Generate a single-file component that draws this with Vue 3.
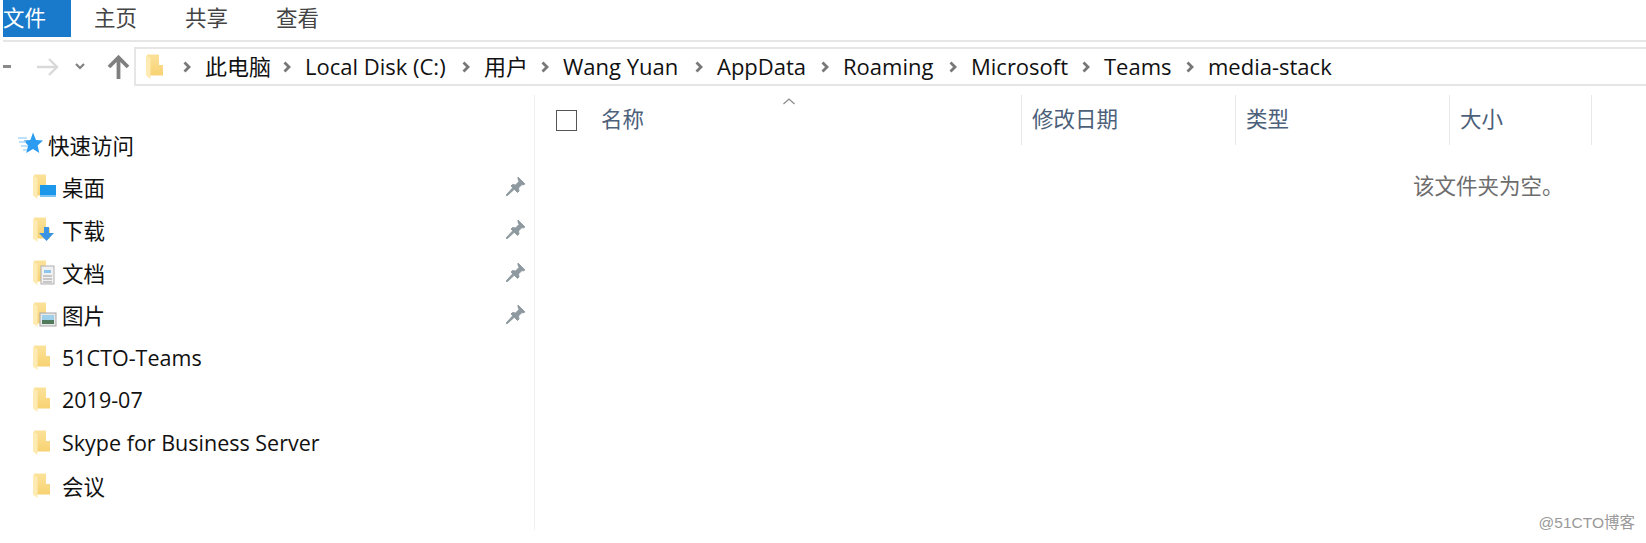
<template>
  <div class="explorer">
    <div class="ribbon">
      <div class="tab file-tab">文件</div>
      <div v-for="tab in tabs" :key="tab" class="tab">{{ tab }}</div>
    </div>

    <div class="nav-row">
      <div class="nav-buttons">
        <div class="back-stub"></div>
        <svg class="forward" width="22" height="20" viewBox="0 0 22 20">
          <path d="M0 10h20M12 2l8 8-8 8" fill="none" stroke="#d9d9d9" stroke-width="2.4" />
        </svg>
        <svg class="recent" width="10" height="7" viewBox="0 0 10 7">
          <path d="M1 1l4 4 4-4" fill="none" stroke="#808080" stroke-width="2.2" />
        </svg>
        <svg class="up" width="23" height="24" viewBox="0 0 23 24">
          <path d="M11.5 24V3M2 12l9.500-9.500L21 12" fill="none" stroke="#7f7f7f" stroke-width="3.800" />
        </svg>
      </div>
      <div class="address">
        <svg class="address-folder" width="17" height="25" viewBox="0 0 17 25">
          <defs>
            <linearGradient id="folderFill" x1="0" y1="0" x2="0" y2="1">
              <stop offset="0" stop-color="#fbe29a" />
              <stop offset="1" stop-color="#f8d272" />
            </linearGradient>
          </defs>
          <path d="M1 .5H13V11H17V21.500H4Z" fill="url(#folderFill)" />
          <path d="M0 1.500L4.500 4V25L0 21.500Z" fill="#fdebb3" />
        </svg>
        <template v-for="crumb in crumbs" :key="crumb.text">
          <svg class="crumb-sep" width="8" height="12" viewBox="0 0 8 12">
            <path d="M1.500 1.500L6 6l-4.500 4.500" fill="none" stroke="#777" stroke-width="2.800" />
          </svg>
          <span class="crumb" :style="{ width: crumb.width + 'px' }">{{ crumb.text }}</span>
        </template>
      </div>
    </div>

    <div class="main">
      <div class="sidebar">
        <div class="row quick">
          <svg class="star" width="25" height="24" viewBox="0 0 25 24">
            <path d="M15 0.500l3 7.500 7 .6-5.400 4.900 1.700 7.500-6.300-3.900-6.800 4 2-7.600-4.600-4.900 6.800-.6z" fill="#2b9cf2" />
            <path d="M0 6h9M1 10h7M3 14h7M5 18h4" stroke="#a9d6f8" stroke-width="1.300" />
          </svg>
          <span>快速访问</span>
        </div>
        <div v-for="item in places" :key="item.name" class="row place">
          <svg class="place-icon" width="24" height="25" viewBox="0 0 24 25">
            <path d="M1 .5H13V11H17V21.500H4Z" fill="url(#folderFill)" />
            <path d="M0 1.500L4.500 4V25L0 21.500Z" fill="#fdebb3" />
            <template v-if="item.icon === 'desktop'">
              <rect x="7" y="11" width="16" height="12" fill="#1c97ea" />
              <rect x="7" y="21" width="16" height="2" fill="#7cc3f2" />
            </template>
            <template v-else-if="item.icon === 'download'">
              <path d="M11 10h5v6h5l-7.500 8L6 16h5z" fill="#3b93e4" />
            </template>
            <template v-else-if="item.icon === 'doc'">
              <rect x="8" y="6" width="13" height="18" fill="#f1f1f1" stroke="#b0b0b0" />
              <rect x="11" y="10" width="7" height="3" fill="#8ac6ee" />
              <path d="M10 16h9M10 19h9M10 22h9" stroke="#9d9d9d" />
            </template>
            <template v-else-if="item.icon === 'pic'">
              <rect x="7" y="11" width="16" height="13" fill="#e8e8e8" stroke="#a5a5a5" />
              <rect x="9" y="13" width="12" height="5" fill="#9fd0ea" />
              <rect x="9" y="18" width="12" height="4" fill="#4f7a5c" />
            </template>
          </svg>
          <span class="place-name">{{ item.name }}</span>
          <svg v-if="item.pinned" class="pin" width="19" height="19" viewBox="0 0 19 19">
            <path d="M12 0l7 7-2 1-1-.5-3.500 3.500.5 3-1.500 1.500L5 9l1.500-1.500 3 .5L13 4.500 12 2zM6.500 11L8 12.500 1.500 18.500 0 19l.5-1.500z" fill="#8d989f" stroke="#8d989f" stroke-width=".9" />
          </svg>
        </div>
      </div>

      <div class="list">
        <div class="list-header">
          <div class="col col-name">
            <span class="checkbox"></span>
            <span>名称</span>
            <svg class="sort" width="12" height="7" viewBox="0 0 12 7">
              <path d="M.5 6L6 1l5.500 5" fill="none" stroke="#8a8a8a" stroke-width="1.200" />
            </svg>
          </div>
          <div class="col col-date">修改日期</div>
          <div class="col col-type">类型</div>
          <div class="col col-size">大小</div>
        </div>
        <div class="empty">该文件夹为空。</div>
      </div>
    </div>

    <div class="watermark">@51CTO博客</div>
  </div>
</template>

<script setup>
const tabs = ['主页', '共享', '查看']

const crumbs = [
  { text: '此电脑', width: 64 },
  { text: 'Local Disk (C:)', width: 143 },
  { text: '用户', width: 43 },
  { text: 'Wang Yuan', width: 118 },
  { text: 'AppData', width: 90 },
  { text: 'Roaming', width: 92 },
  { text: 'Microsoft', width: 97 },
  { text: 'Teams', width: 68 },
  { text: 'media-stack', width: 125 }
]

const places = [
  { name: '桌面', icon: 'desktop', pinned: true },
  { name: '下载', icon: 'download', pinned: true },
  { name: '文档', icon: 'doc', pinned: true },
  { name: '图片', icon: 'pic', pinned: true },
  { name: '51CTO-Teams' },
  { name: '2019-07' },
  { name: 'Skype for Business Server' },
  { name: '会议' }
]
</script>

<style>
html,
body {
  margin: 0;
  background: #fff;
}
</style>

<style scoped>
.explorer {
  position: relative;
  width: 1646px;
  height: 543px;
  overflow: hidden;
  background: #fff;
  color: #111;
  font-family: "Open Sans", "Noto Sans CJK SC", sans-serif;
  font-size: 21.500px;
}

.ribbon {
  display: flex;
  height: 40px;
  margin-left: 3px;
  border-bottom: 2px solid #e6e6e6;
}

.tab {
  width: 91px;
  height: 37px;
  line-height: 35px;
  color: #444;
  text-align: center;
  flex-shrink: 0;
}

.file-tab {
  width: 68px;
  box-sizing: border-box;
  background: #1979ca;
  color: #fff;
  margin-right: -1px;
  text-align: left;
}

.nav-row {
  display: flex;
  align-items: center;
  height: 46px;
  padding-top: 3px;
  box-sizing: border-box;
  margin-left: 3px;
}

.nav-buttons {
  display: flex;
  align-items: center;
  width: 131px;
  flex-shrink: 0;
}

.back-stub {
  width: 8px;
  height: 3px;
  background: #8a8a8a;
}

.forward {
  margin-left: 26px;
}

.recent {
  margin-left: 16px;
}

.up {
  margin-left: 22px;
}

.address {
  display: flex;
  align-items: center;
  flex: 1;
  height: 39px;
  box-sizing: border-box;
  border: 2px solid #e6e6e6;
  border-right: none;
  padding-left: 7px;
  line-height: 33px;
  font-size: 22px;
}

.address-folder {
  margin-right: 20px;
  margin-left: 3px;
}

.crumb {
  color: #111;
  white-space: nowrap;
  margin-left: 14px;
  margin-right: 14px;
}

.main {
  display: flex;
  margin-top: 7px;
}

.sidebar {
  width: 535px;
  height: 435px;
  padding-top: 28px;
  box-sizing: border-box;
  border-right: 1px solid #f0f0f0;
  flex-shrink: 0;
}

.row {
  display: flex;
  align-items: center;
  height: 42.600px;
  white-space: nowrap;
}

.quick {
  padding-left: 18px;
  gap: 5px;
}

.place {
  padding-left: 33px;
}

.place-icon {
  margin-right: 5px;
  flex-shrink: 0;
}

.place-name {
  flex: 1;
}

.pin {
  margin-right: 9px;
}

.list {
  flex: 1;
}

.list-header {
  display: flex;
  height: 50px;
  color: #4c607a;
}

.col {
  display: flex;
  align-items: center;
  box-sizing: border-box;
  border-right: 1px solid #e8e8e8;
  padding-left: 10px;
  padding-bottom: 5px;
  flex-shrink: 0;
}

.col-name {
  position: relative;
  width: 487px;
  padding-left: 21px;
}

.col-date {
  width: 214px;
}

.col-type {
  width: 214px;
}

.col-size {
  width: 142px;
}

.checkbox {
  width: 19px;
  height: 19px;
  border: 1px solid #555;
  margin-right: 24px;
  margin-top: 5px;
  box-sizing: content-box;
}

.sort {
  position: absolute;
  left: 248px;
  top: 3px;
}

.empty {
  padding-left: 878px;
  margin-top: 26px;
  line-height: 30px;
  color: #6d6d6d;
  white-space: nowrap;
}

.watermark {
  position: absolute;
  right: 11px;
  bottom: 11px;
  font-family: "Liberation Sans", "Noto Sans CJK SC", sans-serif;
  font-size: 15.500px;
  color: #999;
}
</style>
